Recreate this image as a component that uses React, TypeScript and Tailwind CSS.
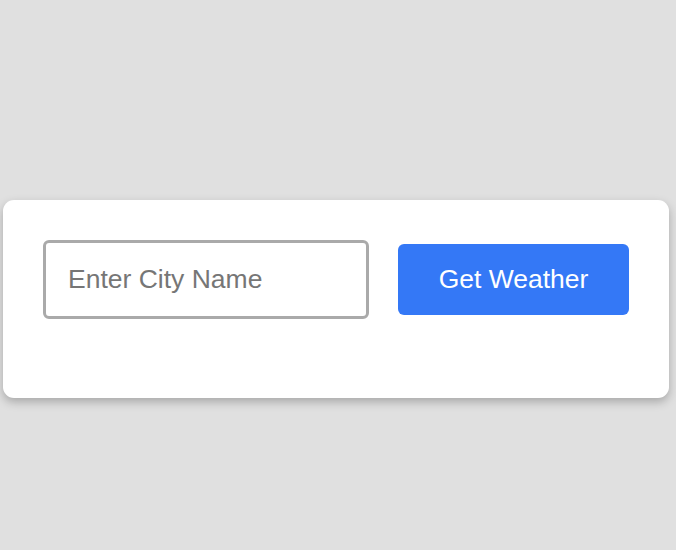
import React, { useState } from 'react';

const App: React.FC = () => {
  const [city, setCity] = useState('');

  return (
    <div className="min-h-[550px] w-full bg-[#e0e0e0] pt-[200px] font-['Liberation_Sans',Arial,sans-serif]">
      <div className="ml-[3px] w-[666px] rounded-[11px] bg-white px-[40px] pt-[40px] pb-[79px] shadow-[0_4px_10px_rgba(0,0,0,0.25)]">
        <div className="flex items-center gap-[29px]">
          <input
            type="text"
            value={city}
            onChange={(e) => setCity(e.target.value)}
            placeholder="Enter City Name"
            className="h-[79px] w-[326px] rounded-[6px] border-[3px] border-[#aaaaaa] bg-white px-[22px] text-[26.5px] text-[#333] placeholder:text-[#767676] outline-none"
          />
          <button className="h-[71px] w-[231px] rounded-[6px] bg-[#3478f6] text-[26.5px] text-white">
            Get Weather
          </button>
        </div>
      </div>
    </div>
  );
};

export default App;
